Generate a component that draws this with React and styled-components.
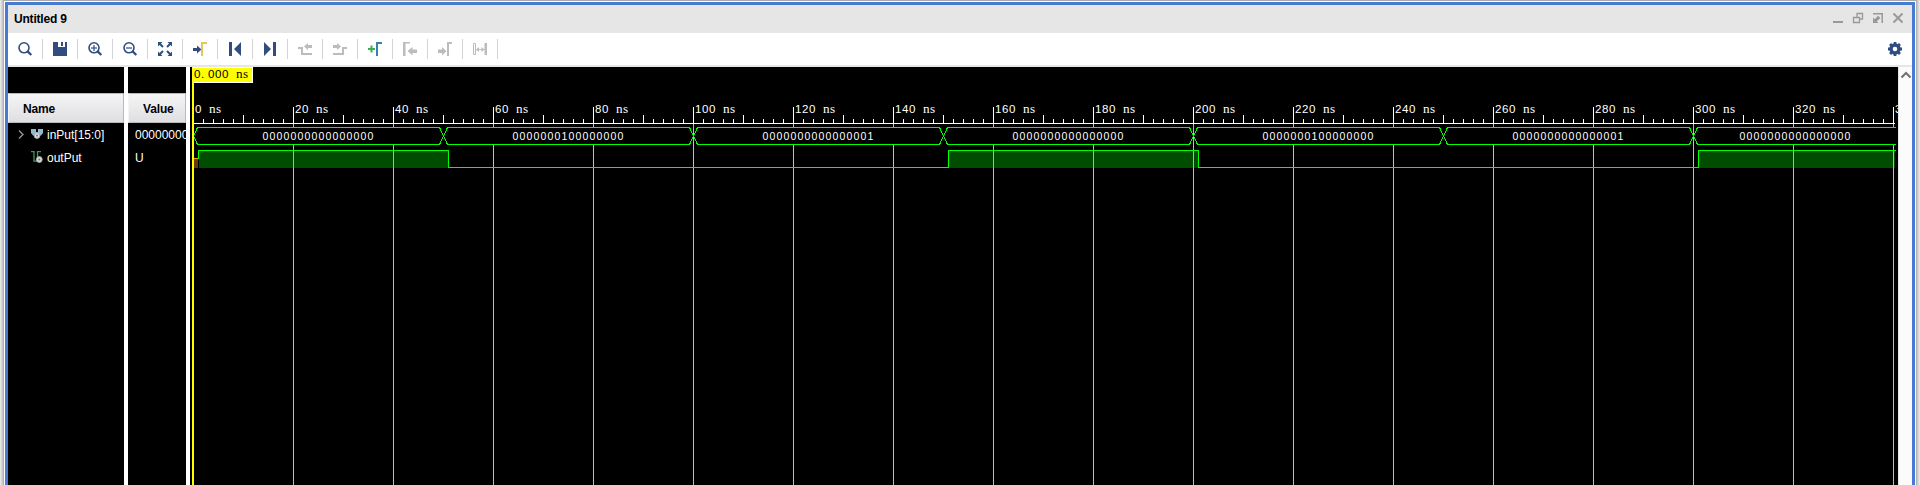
import React from 'react';
import styled, { createGlobalStyle } from 'styled-components';

const Global = createGlobalStyle`
  * { box-sizing: border-box; }
  html, body { margin: 0; height: 100%; overflow: hidden; background: #e4e4e4; }
  body { font: 12px "Liberation Sans", Arial, sans-serif; color: #000; }
  svg { display: block; flex: none; }
`;

const Desktop = styled.div`
  height: 485px;
  width: 1920px;
  padding: 1px 4px 0;
  background: linear-gradient(90deg, #ededed 0, #d0d0d0 2px, #a8a8a8 4px, #a8a8a8 1916px, #d2d2d2 1918px, #ececec 1920px);
`;
const Frame = styled.div`
  height: 484px;
  padding: 1px 1px 0;
  background: #fff;
`;
const Window = styled.section`
  height: 483px;
  border: 3px solid #477bd1;
  border-bottom: 0;
  display: flex;
  flex-direction: column;
  background: #fff;
`;
const TitleBar = styled.header`
  height: 28px;
  flex: none;
  display: flex;
  align-items: center;
  justify-content: space-between;
  padding: 0 4px 0 6px;
  background: #e6e6e6;
`;
const Title = styled.h1`
  margin: 0;
  font-size: 12px;
  line-height: 16px;
  padding-bottom: 1px;
  letter-spacing: -0.2px;
`;
const WindowControls = styled.div`
  display: flex;
`;
const Toolbar = styled.div`
  height: 34px;
  flex: none;
  display: flex;
  align-items: flex-start;
  justify-content: space-between;
  padding: 6px 7px 0;
  border-bottom: 2px solid #e6e6e6;
`;
const Tools = styled.div`
  display: flex;
`;
const Tool = styled.div`
  display: flex;
  width: 35px;
  &::after {
    content: '';
    width: 1px;
    height: 20px;
    margin-left: 7px;
    background: #d4d4d4;
  }
`;
const Body = styled.main`
  flex: 1;
  min-height: 0;
  display: flex;
`;
const Column = styled.div`
  width: ${(p) => p.$width}px;
  margin-right: 4px;
  padding-top: 26px;
  overflow: hidden;
  background: #000;
`;
const ColumnHead = styled.div`
  height: 30px;
  border: 1px solid #b9b9bb;
  border-left-color: #f4f4f4;
  padding-left: ${(p) => p.$indent}px;
  background: linear-gradient(#f5f5f6, #dfdfe2);
  font-weight: bold;
  line-height: 30px;
  letter-spacing: -0.15px;
`;
const Cell = styled.div`
  height: 23px;
  display: flex;
  align-items: center;
  padding-left: ${(p) => p.$indent}px;
  color: #fff;
  white-space: nowrap;
`;
const Wave = styled.div`
  width: 1708px;
  background: #000;
`;
const ScrollTrack = styled.div`
  width: 14px;
  border-left: 1px solid #e4e4e4;
  background: #fbfbfb;
`;

const Icon = ({ children, size = 20 }) => (
  <svg width={size} height={size} viewBox={`0 0 ${size} ${size}`}>{children}</svg>
);

const NAVY = '#314c81';
const GRAY = '#bcbcbc';

const Lens = ({ sign }) => (
  <Icon>
    <circle cx="9" cy="8.8" r="5" fill="none" stroke={NAVY} strokeWidth="1.6" />
    <path d="M12.6 12.4L16.3 16" stroke={NAVY} strokeWidth="2.2" />
    {sign && <path d="M6 9h6" stroke={NAVY} strokeWidth="1.2" />}
    {sign === '+' && <path d="M9 6v6" stroke={NAVY} strokeWidth="1.2" />}
  </Icon>
);

const tools = [
  <Lens />,
  <Icon><path fill={NAVY} d="M3 3h5v5h7V3h2v14H3z M11 3h2v4h-2z" /></Icon>,
  <Lens sign="+" />,
  <Lens sign="-" />,
  <Icon>
    <path fill={NAVY} d="M3 3h4.500L3 7.500z M17 3v4.500L12.500 3z M3 17v-4.500l4.500 4.500z M17 17h-4.500l4.500-4.500z" />
    <path stroke={NAVY} strokeWidth="2" d="M4 4l4 4M16 4l-4 4M4 16l4-4M16 16l-4-4" />
  </Icon>,
  <Icon>
    <path fill={NAVY} d="M3 9h4V6.500l4.500 4L7 14.500V12H3z" />
    <path fill="#e3c65f" d="M11 3h6v2h-4v12h-2z" />
  </Icon>,
  <Icon><path fill={NAVY} d="M4 3h3v14H4z M16 3v14L9 10z" /></Icon>,
  <Icon><path fill={NAVY} d="M13 3h3v14h-3z M4 3v14l7-7z" /></Icon>,
  <Icon>
    <path fill={GRAY} d="M3 8h5v6h9v2H6v-6H3z M9 7.5L13 4v2h4v3h-4v2z" />
  </Icon>,
  <Icon>
    <path fill={GRAY} d="M17 8h-5v6H3v2h11v-6h3z M11 7.5L7 4v2H3v3h4v2z" />
  </Icon>,
  <Icon>
    <path fill="#3fae49" d="M5.5 6.5h2V9H10v2H7.5v2.5h-2V11H3V9h2.5z" />
    <path fill="#357fb5" d="M11 3h6v2h-4v12h-2z" />
  </Icon>,
  <Icon>
    <path fill={GRAY} d="M3 3h7v1.500H5.500v12.500H3z M7.500 12l5-4v2.500H17v3.500h-4.500v2.500z" />
  </Icon>,
  <Icon>
    <path fill={GRAY} d="M12 3h5v2h-3v12h-2z M11.500 12.300L7 8v2.500H3v3.500h4v2.500z" />
  </Icon>,
  <Icon>
    <path fill="none" stroke={GRAY} d="M3.500 4.500h2v11h-2z" />
    <path fill={GRAY} d="M14.500 4h2.500v12h-2.500z M6 10.500l3-2.500v2h2.500v-2l3 2.500-3 2.500v-2H9v2z" />
  </Icon>,
];

const controls = [
  <path fill="#999" d="M5 12h10v2H5z" />,
  <path fill="none" stroke="#999" strokeWidth="1.3" d="M9 8.500V4.500h5.500v5.500h-3M5.500 8.500h6v5h-6z" />,
  <g fill="#999"><path d="M5 4h10v10h-1.500V5.500H5z" /><path d="M5 8.500v5.500h5.500l-1.700-1.700L12.500 9 10 6.700l-3.300 3.500z" /></g>,
  <path stroke="#999" strokeWidth="2" d="M5.500 4.500l9 9M14.500 4.500l-9 9" />,
];

const Gear = () => (
  <Icon>
    <circle cx="10" cy="10" r="4" fill="none" stroke={NAVY} strokeWidth="3.400" />
    {[0, 45, 90, 135].map((a) => (
      <path key={a} transform={`rotate(${a} 10 10)`} stroke={NAVY} strokeWidth="2.800" d="M10 3v2.500M10 14.500v2.500" />
    ))}
  </Icon>
);

const Mark = ({ x, y }) => (
  <>
    <circle cx={x} cy={y} r="2.900" fill="#ddd" stroke="#a5a5a5" />
    <circle cx={x} cy={y} r="1" fill="#777" />
  </>
);

const ZERO = 3;
const END = 1706;
const at = (ns) => ZERO + ns * 5;
const GREEN = '#00ff00';
const zeros = '0000000000000000';
const middle = '0000000100000000';
const last = '0000000000000001';
const bus = [zeros, middle, last, zeros, middle, last, zeros];
const high = [[1, 51], [151, 201], [301, null]];
const majors = Array.from({ length: 18 }, (_, i) => i * 20);

const TimeText = styled.text`
  font: 10.5px "Liberation Sans", Arial, sans-serif;
  fill: ${(p) => p.$color || '#fff'};
  white-space: pre;
`;
const Unit = styled.tspan`
  font: 12px "Liberation Serif", "Times New Roman", serif;
`;
const BusText = styled.text`
  font: 10.5px "Liberation Sans", Arial, sans-serif;
  fill: #fff;
`;

// Characters sit on a fixed 7px pitch; digits are widened to fill their cell.
const STRETCH = 1.1;
const pitch = (from, count, scale = 1) =>
  Array.from({ length: count }, (_, i) => ((from + i) * 7) / scale).join(' ');

const Time = ({ x, y, color, value }) => (
  <TimeText $color={color} transform={`translate(${x} ${y}) scale(${STRETCH} 1)`} x={pitch(0, value.length + 1, STRETCH)} y="0">
    {`${value} `}
    <Unit x={pitch(value.length + 1, 2, STRETCH)}>ns</Unit>
  </TimeText>
);
const BusValue = ({ x, y, children }) => (
  <BusText transform={`translate(${x} ${y})`} x={pitch(0, children.length)} y="0">{children}</BusText>
);

function Waveform() {
  return (
    <svg width="1708" height="418" viewBox="0 0 1708 418" shapeRendering="crispEdges">
      {majors.slice(1).map((ns) => <path key={ns} fill="#bdbdbd" d={`M${at(ns)} 57h1v361h-1z`} />)}
      {majors.map((ns) => (
        <g key={ns}>
          {ns > 0 && <path fill="#fff" d={`M${at(ns)} 40h1v17h-1z`} />}
          <Time x={at(ns) + 2} y={46} value={String(ns)} />
        </g>
      ))}
      {Array.from({ length: 170 }, (_, i) => i + 1).filter((i) => i % 10).map((i) => (
        <rect key={i} x={ZERO + i * 10} y={i % 5 ? 52 : 48} width="1" height={i % 5 ? 4 : 8} fill="#fff" />
      ))}
      <rect x={ZERO} y="56" width={END - ZERO - 1} height="1" fill="#fff" />

      {bus.map((value, i) => {
        const a = at(i * 50);
        const open = i === 6;
        const b = open ? END : at(i * 50 + 50);
        const right = open ? `H${b}M${b} 77.5H${a + 4.500}` : `H${b - 3.500}L${b + 0.500} 69L${b - 3.500} 77.5H${a + 4.500}`;
        return (
          <g key={i}>
            <rect x={a + 2} y="61" width={b - a - (open ? 2 : 3)} height="16" fill="#000" />
            <path fill="none" stroke={GREEN} d={`M${a + 0.500} 69L${a + 4.500} 60.5${right}L${a + 0.500} 69`} />
            <BusValue x={Math.round((a + b) / 2) - 55.5} y={73}>{value}</BusValue>
          </g>
        );
      })}

      <rect x="4" y="92" width="4" height="9" fill="#6b3a00" />
      <rect x="4" y="91" width="4" height="1" fill="#ff9a00" />
      {high.map(([from, to]) => {
        const a = at(from);
        const b = to ? at(to) : END - 1;
        return <rect key={from} x={a + 1} y="84" width={b - a - 1} height="17" fill={GREEN} fillOpacity="0.3" />;
      })}
      <path
        fill="none"
        stroke={GREEN}
        d={`M8.500 92V83.500H${at(51) + 0.500}V100.500H${at(151) + 0.500}V83.500H${at(201) + 0.500}V100.500H${at(301) + 0.500}V83.500H${END}`}
      />

      <rect x="2" y="0" width="2" height="418" fill="#ff0" />
      <rect x="3" y="0" width="60" height="16" fill="#fff" />
      <rect x="3" y="1" width="59" height="14" fill="#ff0" />
      <Time x={4} y={11} color="#000" value="0.000" />
    </svg>
  );
}

export default function App() {
  return (
    <Desktop>
      <Global />
      <Frame>
        <Window>
          <TitleBar>
            <Title>Untitled 9</Title>
            <WindowControls>
              {controls.map((c, i) => <Icon key={i}>{c}</Icon>)}
            </WindowControls>
          </TitleBar>
          <Toolbar>
            <Tools>
              {tools.map((icon, i) => <Tool key={i}>{icon}</Tool>)}
            </Tools>
            <Gear />
          </Toolbar>
          <Body>
            <Column $width={116}>
              <ColumnHead $indent={14}>Name</ColumnHead>
              <Cell $indent={8}>
                <svg width="31" height="17" viewBox="0 0 31 17">
                  <path fill="none" stroke="#999" strokeWidth="1.300" d="M3 4.500l4 4-4 4" />
                  <path fill="#8fb9d2" d="M15 3h5v3h2V3h5v4l-2 2.500h-8L15 7z" />
                  <Mark x={21} y={9.5} />
                </svg>
                inPut[15:0]
              </Cell>
              <Cell $indent={22}>
                <svg width="17" height="17" viewBox="0 0 17 17">
                  <path fill="none" stroke="#3f9a50" strokeWidth="1.300" d="M1 2.600h3v9.500h3.500V2.600H11" />
                  <Mark x={9.3} y={10.5} />
                </svg>
                outPut
              </Cell>
            </Column>
            <Column $width={58}>
              <ColumnHead $indent={14}>Value</ColumnHead>
              <Cell $indent={7}>0000000000000000</Cell>
              <Cell $indent={7}>U</Cell>
            </Column>
            <Wave><Waveform /></Wave>
            <ScrollTrack>
              <svg width="13" height="16" viewBox="0 0 13 16">
                <path fill="none" stroke="#707070" strokeWidth="2" d="M2.500 10.500L7 6l4.500 4.500" />
              </svg>
            </ScrollTrack>
          </Body>
        </Window>
      </Frame>
    </Desktop>
  );
}
